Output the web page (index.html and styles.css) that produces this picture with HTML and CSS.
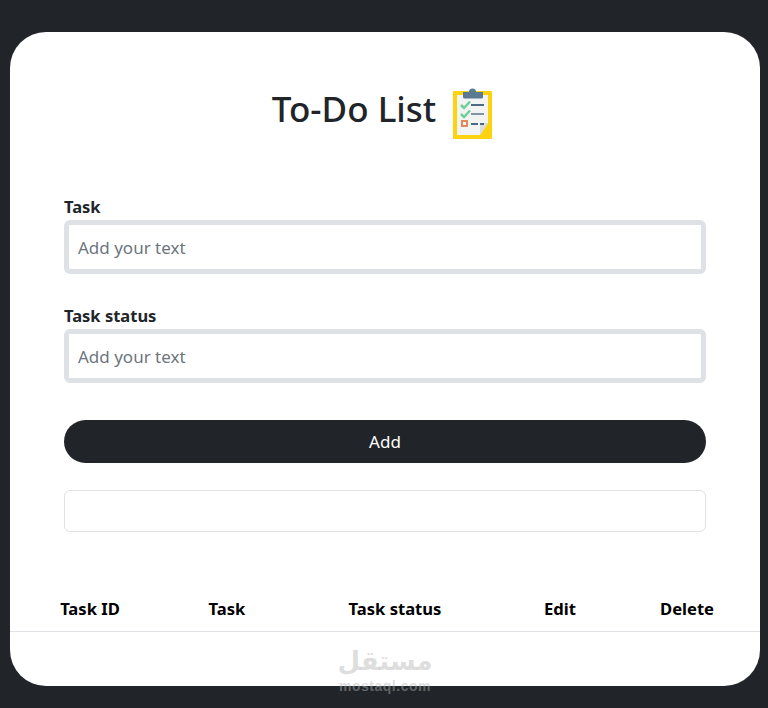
FILE: index.html
```html
<!DOCTYPE html>
<html lang="en">
<head>
    <meta charset="utf-8">
    <title>To-Do List</title>
    <link rel="stylesheet" href="styles.css">
</head>
<body>
    <div class="card">
        <h1 class="title">
            To-Do List
            <svg class="title-icon" width="39" height="52" viewBox="0 0 39 52">
                <rect x="0" y="4" width="39" height="48" rx="1" fill="#fdd20e"/>
                <path d="M4 8h31v28l-8 12H4z" fill="#f2f3f3"/>
                <path d="M35 36l-8 12V36z" fill="#dcdcdc"/>
                <path d="M10 10V5h6a3.500 3.500 0 0 1 7 0h7v5a1.500 1.500 0 0 1-1.500 1.500h-17A1.500 1.500 0 0 1 10 10z" fill="#5b7a93"/>
                <path d="M8 18l3 3 6-6.500M8 27l3 3 6-6.500" fill="none" stroke="#6fcf97" stroke-width="2.500"/>
                <path d="M18 18h13" stroke="#4f6b82" stroke-width="2"/>
                <path d="M18 27h13" stroke="#7f95a6" stroke-width="2"/>
                <rect x="9" y="34" width="5" height="5" fill="none" stroke="#e08a5a" stroke-width="2"/>
                <path d="M18 37h7M27 37h4" stroke="#4f6b82" stroke-width="2"/>
            </svg>
        </h1>

        <form class="todo-form">
            <label class="field">
                <span class="field-label">Task</span>
                <input class="field-input" type="text" placeholder="Add your text">
            </label>
            <label class="field">
                <span class="field-label">Task status</span>
                <input class="field-input" type="text" placeholder="Add your text">
            </label>
            <button class="add-btn" type="button">Add</button>
            <div class="message"></div>
        </form>

        <table class="tasks">
            <colgroup>
                <col class="col-id"><col class="col-task"><col class="col-status"><col class="col-edit"><col class="col-delete">
            </colgroup>
            <thead>
                <tr>
                    <th>Task ID</th>
                    <th>Task</th>
                    <th>Task status</th>
                    <th>Edit</th>
                    <th>Delete</th>
                </tr>
            </thead>
        </table>
    </div>

    <div class="watermark">
        <div class="watermark-ar">مستقل</div>
        <div class="watermark-en">mostaql.com</div>
    </div>
</body>
</html>
```

FILE: styles.css
```css
*{margin:0;padding:0;box-sizing:border-box;}
html,body{height:100%;}
body{background:#212529;padding:32px 8px 22px 10px;font-family:"Noto Sans","Open Sans",sans-serif;color:#212529;overflow:hidden;}

.card{width:750px;height:654px;background:#fff;border-radius:36px;padding-top:47px;}

.title{display:flex;justify-content:center;align-items:center;gap:17px;height:60px;padding-right:6px;font-size:35px;font-weight:500;line-height:60px;}
.title-icon{display:block;margin-top:8px;}

.todo-form{margin:56px 54px 0;}
.field{display:block;margin-bottom:30px;}
.field-label{display:block;height:24px;font-size:16.5px;font-weight:700;line-height:24px;margin-bottom:1px;}
.field-input{display:block;width:100%;height:54px;padding:0 9px;border:5px solid #dee2e6;border-radius:6px;font:17px "Noto Sans","Open Sans",sans-serif;color:#212529;outline:none;}
.field-input::placeholder{color:#6c757d;opacity:1;}

.add-btn{display:block;width:100%;height:43px;margin-top:37px;border:0;border-radius:22px;background:#212529;color:#fff;font:17px "Noto Sans","Open Sans",sans-serif;}
.message{height:42px;margin-top:27px;border:1px solid #dee2e6;border-radius:6px;}

.tasks{width:100%;margin-top:59px;border-collapse:collapse;table-layout:fixed;}
.tasks th{height:40px;padding:0 0 4px;font-size:16.6px;font-weight:700;color:#000;text-align:center;border-bottom:1px solid #dee2e6;}
.col-id{width:160px;}
.col-task{width:114px;}
.col-status{width:222px;}
.col-edit{width:108px;}
.col-delete{width:146px;}

.watermark{position:absolute;left:335px;top:647px;width:100px;text-align:center;color:rgba(181,181,181,.45);}
.watermark-ar{height:32px;font:700 26px/28px "DejaVu Sans",sans-serif;}
.watermark-en{font:700 14px/14px "Liberation Sans",sans-serif;letter-spacing:.5px;}
```
